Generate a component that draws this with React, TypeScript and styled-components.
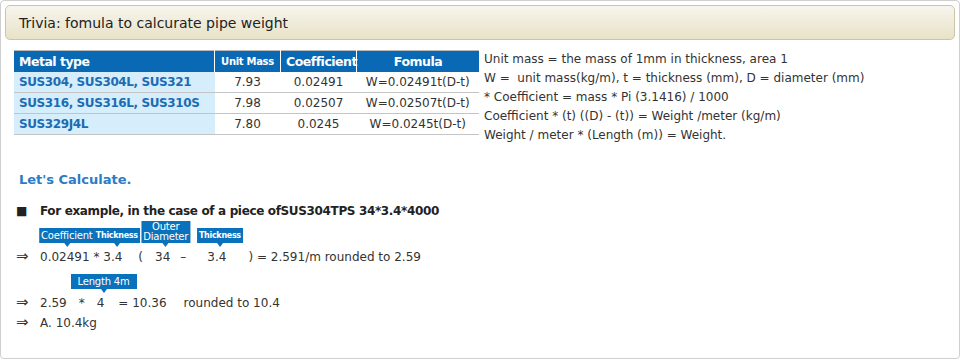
import React from 'react';
import styled, { createGlobalStyle } from 'styled-components';

const GlobalStyle = createGlobalStyle`
  body {
    margin: 0;
    background: #ffffff;
    font-family: "DejaVu Sans", "Noto Sans CJK JP", sans-serif;
    font-size: 12px;
    color: #333333;
  }
`;

const Frame = styled.div`
  width: 960px;
  height: 359px;
  box-sizing: border-box;
  border: 1px solid #cfcfcf;
  border-radius: 4px;
  padding: 4px 4px 0 4px;
`;

const TitleBar = styled.h2`
  margin: 0;
  height: 35px;
  box-sizing: border-box;
  display: flex;
  align-items: center;
  padding-left: 13px;
  border: 1px solid #cbc4a6;
  border-radius: 5px;
  background: linear-gradient(#f7f5ee, #e8e2c7);
  font-size: 14px;
  font-weight: normal;
  color: #222222;
`;

const InfoRow = styled.div`
  display: flex;
  align-items: flex-start;
  gap: 5px;
  margin: 10px 0 0 9px;
`;

const Table = styled.table`
  border-collapse: collapse;
  border-top: 1px solid #b9b9b9;
  table-layout: fixed;
  width: 465px;
  flex: none;
`;

const HeadCell = styled.th<{ $small?: boolean; $left?: boolean; $w?: number }>`
  ${p => (p.$w ? `width: ${p.$w - 10}px;` : '')}
  height: 21px;
  padding: 0 5px;
  background: #0a69b5;
  color: #ffffff;
  font-weight: bold;
  font-size: ${p => (p.$small ? '10px' : '12.5px')};
  letter-spacing: ${p => (p.$small ? '-0.3px' : '-0.5px')};
  text-align: ${p => (p.$left ? 'left' : 'center')};
  white-space: nowrap;
  border-left: 1px solid #ffffff;
  &:first-child {
    border-left: none;
  }
`;

const Cell = styled.td<{ $type?: boolean }>`
  height: 20px;
  padding: 0 5px;
  border-bottom: 1px solid #c4c4c4;
  white-space: nowrap;
  text-align: ${p => (p.$type ? 'left' : 'center')};
  background: ${p => (p.$type ? '#d6edfc' : '#ffffff')};
  color: ${p => (p.$type ? '#1b6cb3' : '#333333')};
  font-weight: ${p => (p.$type ? 'bold' : 'normal')};
  letter-spacing: ${p => (p.$type ? '-0.4px' : 'normal')};
`;

const Notes = styled.div`
  line-height: 19px;
  color: #333333;
  white-space: pre;
`;

const Calc = styled.section`
  padding-left: 14px;
`;

const Heading = styled.h3`
  margin: 25px 0 0 0;
  font-size: 13px;
  line-height: 20px;
  color: #2a7cc6;
  font-weight: bold;
`;

const Bullet = styled.p`
  margin: 12px 0 0 0;
  line-height: 18px;
  font-weight: bold;
  letter-spacing: -0.35px;
  color: #222222;
`;

const Mark = styled.span<{ $size?: number }>`
  display: inline-block;
  width: 24px;
  margin-left: -3px;
  font-weight: normal;
  letter-spacing: normal;
  font-size: ${p => p.$size || 12}px;
  line-height: 18px;
  vertical-align: top;
`;

const Line = styled.div<{ $gap: number }>`
  margin-top: ${p => p.$gap}px;
  line-height: 20px;
  height: 20px;
  white-space: nowrap;
  color: #333333;
`;

const Gap = styled.span<{ $w: number }>`
  display: inline-block;
  width: ${p => p.$w}px;
`;

const Tagged = styled.span`
  position: relative;
  display: inline-block;
`;

const Tag = styled.span<{
  $shift?: number;
  $pad?: number;
  $size?: number;
  $bold?: boolean;
  $lh?: number;
}>`
  position: absolute;
  bottom: calc(100% + 4px);
  left: 50%;
  transform: translateX(calc(-50% + ${p => p.$shift || 0}px));
  padding: 1px ${p => p.$pad ?? 2}px;
  background: #0a71bc;
  color: #ffffff;
  font-size: ${p => p.$size || 10}px;
  font-weight: ${p => (p.$bold ? 'bold' : 'normal')};
  letter-spacing: ${p => (p.$bold ? '-0.3px' : '-0.2px')};
  line-height: ${p => p.$lh || 13}px;
  text-align: center;
  white-space: nowrap;
  &::after {
    content: '';
    position: absolute;
    top: 100%;
    left: 50%;
    margin-left: -3px;
    border-left: 3px solid transparent;
    border-right: 3px solid transparent;
    border-top: 4px solid #0a71bc;
  }
`;

const rows = [
  ['SUS304, SUS304L, SUS321', '7.93', '0.02491', 'W=0.02491t(D-t)'],
  ['SUS316, SUS316L, SUS310S', '7.98', '0.02507', 'W=0.02507t(D-t)'],
  ['SUS329J4L', '7.80', '0.0245', 'W=0.0245t(D-t)'],
];

const notes = [
  'Unit mass = the mass of 1mm in thickness, area 1',
  'W =  unit mass(kg/m), t = thickness (mm), D = diameter (mm)',
  '* Coefficient = mass * Pi (3.1416) / 1000',
  'Coefficient * (t) ((D) - (t)) = Weight /meter (kg/m)',
  'Weight / meter * (Length (m)) = Weight.',
];

const Arrow = () => <Mark $size={15}>⇒</Mark>;

export default function App() {
  return (
    <>
      <GlobalStyle />
      <Frame>
        <TitleBar>Trivia: fomula to calcurate pipe weight</TitleBar>
        <InfoRow>
          <Table>
            <thead>
              <tr>
                <HeadCell $w={200} $left>Metal type</HeadCell>
                <HeadCell $w={65} $small>Unit Mass</HeadCell>
                <HeadCell $w={75}>Coefficient</HeadCell>
                <HeadCell>Fomula</HeadCell>
              </tr>
            </thead>
            <tbody>
              {rows.map(r => (
                <tr key={r[0]}>
                  <Cell $type>{r[0]}</Cell>
                  <Cell>{r[1]}</Cell>
                  <Cell>{r[2]}</Cell>
                  <Cell>{r[3]}</Cell>
                </tr>
              ))}
            </tbody>
          </Table>
          <Notes>
            {notes.map(n => (
              <div key={n}>{n}</div>
            ))}
          </Notes>
        </InfoRow>
        <Calc>
          <Heading>Let's Calculate.</Heading>
          <Bullet>
            <Mark>■</Mark>For example, in the case of a piece ofSUS304TPS 34*3.4*4000
          </Bullet>
          <Line $gap={27}>
            <Arrow />
            <Tagged>
              0.02491<Tag $shift={2}>Coefficient</Tag>
            </Tagged>
            {' * '}
            <Tagged>
              3.4<Tag $shift={4} $size={8} $bold>Thickness</Tag>
            </Tagged>
            <Gap $w={16} />(<Gap $w={12} />
            <Tagged>
              34<Tag $shift={3} $lh={10}>Outer<br />Diameter</Tag>
            </Tagged>
            <Gap $w={10} />–<Gap $w={21} />
            <Tagged>
              3.4<Tag $shift={3} $size={8} $bold>Thickness</Tag>
            </Tagged>
            <Gap $w={22} />) = 2.591/m rounded to 2.59
          </Line>
          <Line $gap={26}>
            <Arrow />
            2.59<Gap $w={12} />*<Gap $w={12} />
            <Tagged>
              4<Tag $pad={7} $shift={3}>Length 4m</Tag>
            </Tagged>
            <Gap $w={14} />= 10.36<Gap $w={17} />rounded to 10.4
          </Line>
          <Line $gap={0}>
            <Arrow />
            A. 10.4kg
          </Line>
        </Calc>
      </Frame>
    </>
  );
}
